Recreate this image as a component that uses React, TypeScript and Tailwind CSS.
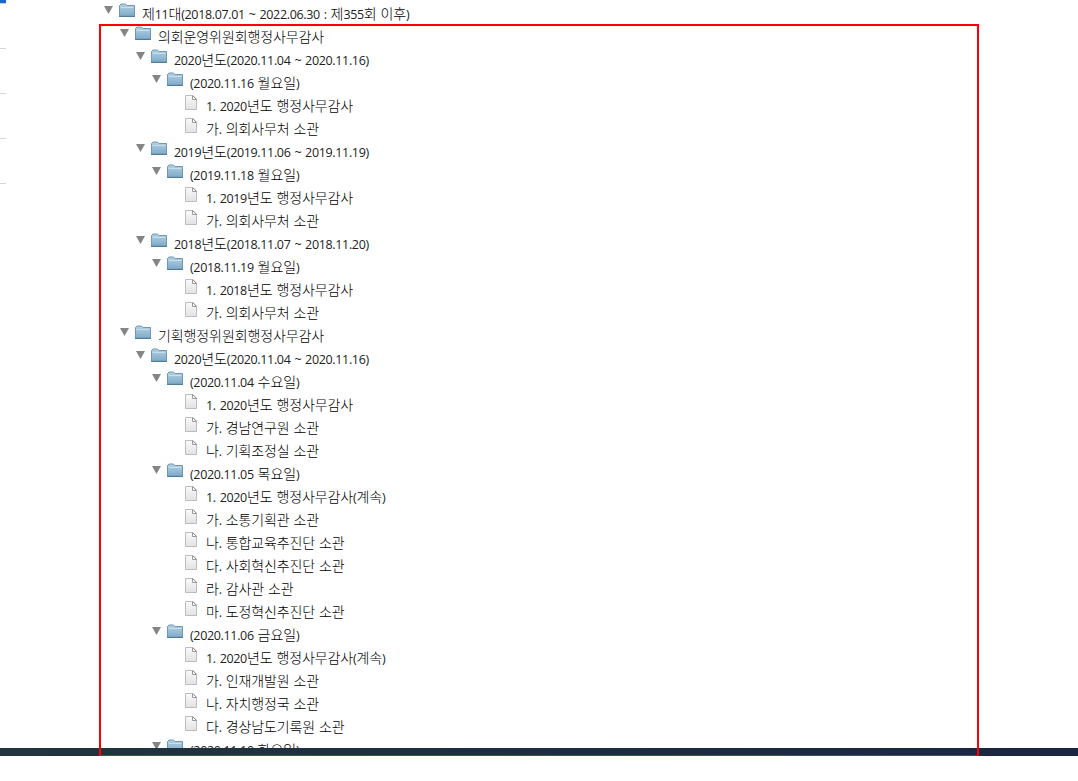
import React from "react";

type Item = [depth: number, text: string];

const items: Item[] = [
  [0, "제11대(2018.07.01 ~ 2022.06.30 : 제355회 이후)"],
  [1, "의회운영위원회행정사무감사"],
  [2, "2020년도(2020.11.04 ~ 2020.11.16)"],
  [3, "(2020.11.16 월요일)"],
  [4, "1. 2020년도 행정사무감사"],
  [4, "가. 의회사무처 소관"],
  [2, "2019년도(2019.11.06 ~ 2019.11.19)"],
  [3, "(2019.11.18 월요일)"],
  [4, "1. 2019년도 행정사무감사"],
  [4, "가. 의회사무처 소관"],
  [2, "2018년도(2018.11.07 ~ 2018.11.20)"],
  [3, "(2018.11.19 월요일)"],
  [4, "1. 2018년도 행정사무감사"],
  [4, "가. 의회사무처 소관"],
  [1, "기획행정위원회행정사무감사"],
  [2, "2020년도(2020.11.04 ~ 2020.11.16)"],
  [3, "(2020.11.04 수요일)"],
  [4, "1. 2020년도 행정사무감사"],
  [4, "가. 경남연구원 소관"],
  [4, "나. 기획조정실 소관"],
  [3, "(2020.11.05 목요일)"],
  [4, "1. 2020년도 행정사무감사(계속)"],
  [4, "가. 소통기획관 소관"],
  [4, "나. 통합교육추진단 소관"],
  [4, "다. 사회혁신추진단 소관"],
  [4, "라. 감사관 소관"],
  [4, "마. 도정혁신추진단 소관"],
  [3, "(2020.11.06 금요일)"],
  [4, "1. 2020년도 행정사무감사(계속)"],
  [4, "가. 인재개발원 소관"],
  [4, "나. 자치행정국 소관"],
  [4, "다. 경상남도기록원 소관"],
  [3, "(2020.11.10 화요일)"],
];

const indents = ["pl-0", "pl-4", "pl-8", "pl-12", "pl-16"];

function Label({ text }: { text: string }) {
  const runs = text.match(/[가-힣]+|[^가-힣]+/g) ?? [];
  return (
    <span className="flex whitespace-pre">
      {runs.map((run, i) =>
        /[가-힣]/.test(run) ? (
          <span
            key={i}
            className="font-['Noto_Sans_CJK_KR',sans-serif] text-[14px] leading-[23px] font-light tracking-[-0.1px] text-black"
          >
            {run}
          </span>
        ) : (
          <span
            key={i}
            className="font-['Open_Sans',sans-serif] text-[12.5px] leading-[25px] tracking-[-0.34px] text-[#222] [word-spacing:1px]"
          >
            {run}
          </span>
        ),
      )}
    </span>
  );
}

function Folder() {
  return (
    <svg width="16" height="14" viewBox="0 0 16 14" className="block">
      <defs>
        <linearGradient id="folder" x1="0" y1="0" x2="0" y2="1">
          <stop offset="0" stopColor="#b5d1e3" />
          <stop offset="1" stopColor="#7fabc9" />
        </linearGradient>
      </defs>
      <path d="M.5 13V2.5L2 1h4.5L8 2.5h7.5V13z" fill="url(#folder)" stroke="#6d98b3" />
      <path d="M0 13.5h16" stroke="#527d99" />
      <path d="M1.5 4.5h13" stroke="#c9dfec" />
    </svg>
  );
}

function Page() {
  return (
    <svg width="12" height="15" viewBox="0 0 12 15" className="ml-[2px] block">
      <defs>
        <linearGradient id="page" x1="0" y1="0" x2="0" y2="1">
          <stop offset="0" stopColor="#fafafa" />
          <stop offset="1" stopColor="#e2e2e2" />
        </linearGradient>
      </defs>
      <path d="M.5.5H8L11.5 4v10.5H.5z" fill="url(#page)" stroke="#bcbcbc" />
      <path d="M7.5.5v4h4z" fill="#fff" stroke="#999" />
    </svg>
  );
}

function Row({ item: [depth, text] }: { item: Item }) {
  return (
    <li className={`flex h-[23px] shrink-0 items-start ${indents[depth]}`}>
      <span className="w-[15px] shrink-0 pt-1">
        {depth < 4 && (
          <svg width="9" height="8" viewBox="0 0 9 8" className="block">
            <path d="M0 0h9L4.5 8z" fill="#858585" />
          </svg>
        )}
      </span>
      <span className="w-[23px] shrink-0 pt-px">{depth < 4 ? <Folder /> : <Page />}</span>
      <Label text={text} />
    </li>
  );
}

export default function App() {
  return (
    <div className="relative flex h-[781px] w-[1078px] flex-col overflow-hidden bg-white">
      <div className="flex h-[748px] shrink-0 overflow-hidden">
        <div className="w-[6px] shrink-0">
          <div className="h-1 border-b border-[#c4d3e8] bg-[#1967d2]" />
          <div className="h-[45px] border-b border-[#d6d6d6]" />
          <div className="h-[45px] border-b border-[#d6d6d6]" />
          <div className="h-[45px] border-b border-[#d6d6d6]" />
          <div className="h-[45px] border-b border-[#d6d6d6]" />
        </div>
        <ul className="flex flex-col pt-[2px] pl-[98px]">
          {items.map((item, i) => (
            <Row key={i} item={item} />
          ))}
        </ul>
      </div>
      <div className="h-2 shrink-0 bg-linear-to-r from-[#21353d] to-[#1a2642]" />
      <div className="absolute top-[24px] left-[99px] h-[732px] w-[880px] border-2 border-b border-[#ff0000]" />
    </div>
  );
}
